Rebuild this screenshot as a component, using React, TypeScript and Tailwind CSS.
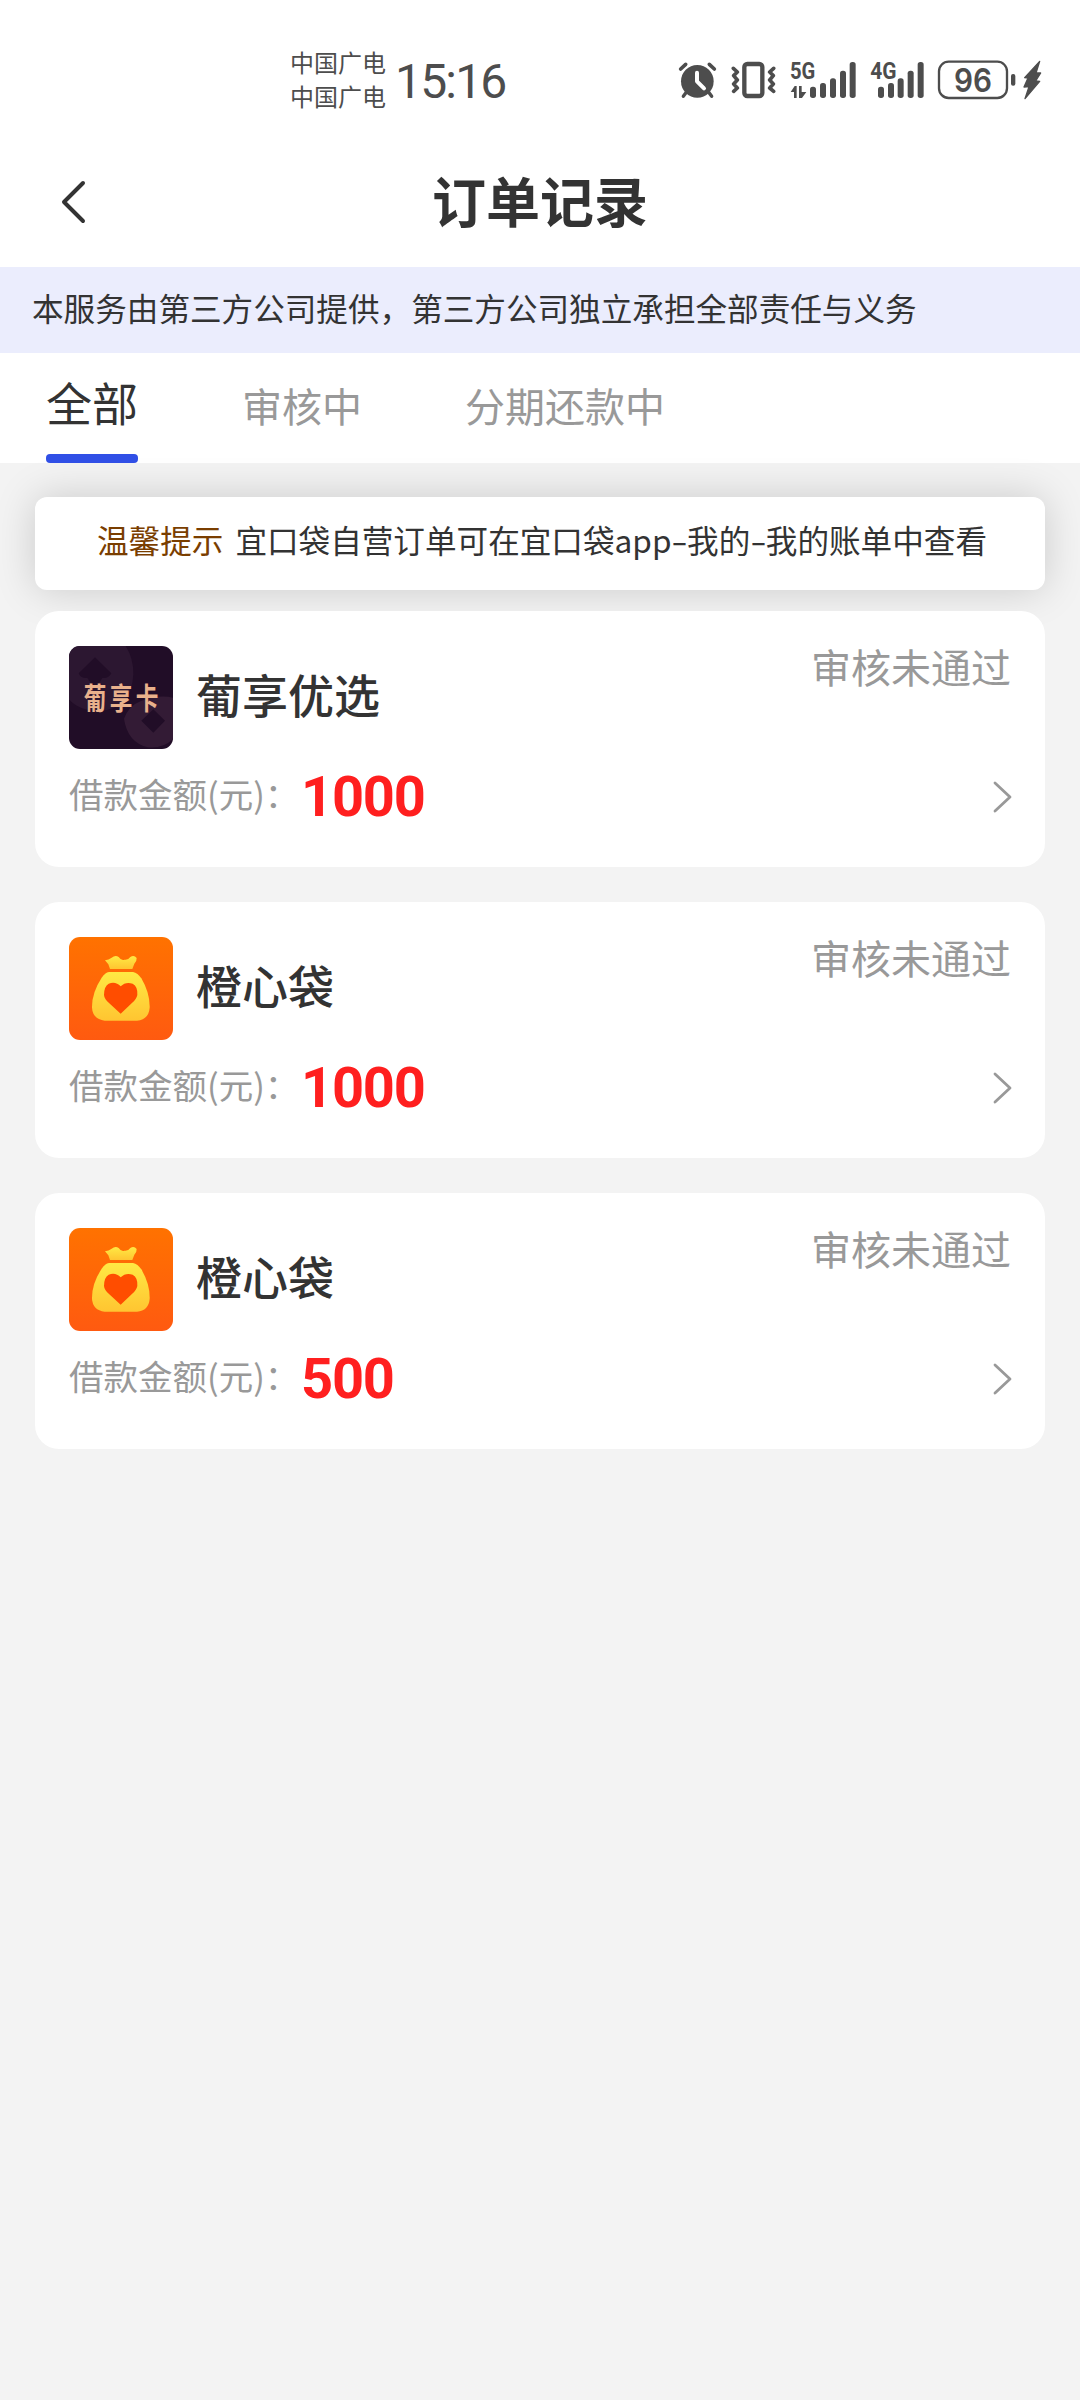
type LogoKind = "grape" | "bag";

interface Order {
  id: number;
  name: string;
  logo: LogoKind;
  status: string;
  amount: number;
}

const orders: Order[] = [
  { id: 1, name: "葡享优选", logo: "grape", status: "审核未通过", amount: 1000 },
  { id: 2, name: "橙心袋", logo: "bag", status: "审核未通过", amount: 1000 },
  { id: 3, name: "橙心袋", logo: "bag", status: "审核未通过", amount: 500 },
];

const AlarmIcon = () => (
  <svg width="39" height="40" viewBox="54 60 117 120" fill="none" stroke="#4d4d4d" strokeLinecap="round">
    <circle cx="112" cy="124" r="49" fill="#4d4d4d" stroke="none" />
    <path d="M62 87 L77 73 M163 87 L148 73" strokeWidth="11" />
    <path d="M80 155 L70 169 M145 155 L155 169" strokeWidth="10" />
    <path d="M111 98 V124 L132 145" stroke="#fff" strokeWidth="12" strokeLinejoin="round" />
  </svg>
);

const VibrateIcon = () => (
  <svg width="45" height="40" viewBox="213 60 135 120" fill="none" stroke="#4d4d4d">
    <rect x="253" y="72" width="54" height="96" rx="9" strokeWidth="13" />
    <path
      d="M220 85 L232 96 L221 107 L232 120 L221 132 L232 144 L221 154 M341 85 L329 96 L340 107 L329 120 L340 132 L329 144 L341 154"
      strokeWidth="11"
      strokeLinecap="round"
      strokeLinejoin="round"
    />
  </svg>
);

const Signal5G = () => (
  <svg width="66" height="40" viewBox="390 60 198 120" className="overflow-visible" fill="#4d4d4d">
    <text x="390" y="118" fontSize="70" fontWeight="700" textLength="76" lengthAdjust="spacingAndGlyphs" fontFamily="Roboto, sans-serif">
      5G
    </text>
    <path d="M392 156 L404 138 H410 V174 H402 V156 Z M417 138 H425 V156 H439 L426 174 H417 Z" />
    <rect x="450" y="140" width="18" height="34" rx="8" />
    <rect x="480" y="129" width="18" height="45" rx="8" />
    <rect x="510" y="115" width="18" height="59" rx="8" />
    <rect x="540" y="92" width="18" height="82" rx="8" />
    <rect x="569" y="66" width="18" height="108" rx="8" />
  </svg>
);

const Signal4G = () => (
  <svg width="54" height="40" viewBox="630 60 162 120" className="overflow-visible" fill="#4d4d4d">
    <text x="631" y="118" fontSize="70" fontWeight="700" textLength="79" lengthAdjust="spacingAndGlyphs" fontFamily="Roboto, sans-serif">
      4G
    </text>
    <rect x="654" y="140" width="18" height="34" rx="8" />
    <rect x="684" y="129" width="18" height="45" rx="8" />
    <rect x="713" y="115" width="18" height="59" rx="8" />
    <rect x="743" y="92" width="18" height="82" rx="8" />
    <rect x="773" y="66" width="18" height="108" rx="8" />
  </svg>
);

const Battery = () => (
  <svg width="78" height="40" viewBox="834 60 234 120" className="overflow-visible" fill="#4d4d4d">
    <rect x="837" y="65" width="204" height="109" rx="29" fill="none" stroke="#4d4d4d" strokeWidth="7" />
    <rect x="1053" y="102" width="13" height="35" rx="6" />
    <text x="882" y="155" fontSize="98" fontWeight="600" textLength="114" lengthAdjust="spacingAndGlyphs" fontFamily="Inter, sans-serif">
      96
    </text>
  </svg>
);

const BoltIcon = () => (
  <svg width="19" height="40" viewBox="1090 60 57 120" fill="#4d4d4d">
    <path
      d="M1140 64 L1095 113 L1105 114 L1093 141 L1108 140 L1096 176 L1140 124 L1128 123 L1143 99 L1129 99 Z"
      stroke="#4d4d4d"
      strokeWidth="4"
      strokeLinejoin="round"
    />
  </svg>
);

const StatusBar = () => (
  <div className="flex h-[135px] items-start justify-between pl-[290px] pr-[38px] text-[#4d4d4d]">
    <div className="flex">
      <div className="mt-[45px] text-[24px] leading-[34px]">
        <p>中国广电</p>
        <p>中国广电</p>
      </div>
      <p className="ml-[9px] mt-[52px] font-[Roboto,sans-serif] text-[48px] leading-[60px] tracking-[-1.8px]">15:16</p>
    </div>
    <div className="mt-[60px] flex">
      <AlarmIcon />
      <div className="ml-[14px]"><VibrateIcon /></div>
      <div className="ml-[14px]"><Signal5G /></div>
      <div className="ml-[14px]"><Signal4G /></div>
      <div className="ml-[14px]"><Battery /></div>
      <div className="ml-[7px]"><BoltIcon /></div>
    </div>
  </div>
);

const GrapeLogo = () => (
  <svg width="104" height="103" viewBox="0 0 312 309" className="shrink-0 rounded-[11px]">
    <rect width="312" height="309" fill="#210d27" />
    <path d="M0 0 H170 Q194 38 193 85 Q188 190 90 195 Q30 195 0 160 Z" fill="#2c1731" />
    <path d="M165 218 Q180 178 216 165 Q270 145 312 155 V280 Q280 309 236 304 Q175 288 165 218 Z" fill="#331b35" />
    <path d="M78 34 L127 82 Q120 98 100 96 L78 130 L55 96 Q34 98 29 82 Z" fill="#210d27" />
    <path d="M253 190 L288 224 L253 260 L217 224 Z" fill="#210d27" />
    <text
      transform="translate(44 188) scale(1 1.3)"
      fontSize="68"
      fontWeight="700"
      letterSpacing="10"
      fill="#e9b18c"
    >
      葡享卡
    </text>
  </svg>
);

const BagLogo = () => (
  <svg width="104" height="103" viewBox="0 0 312 309" className="shrink-0 rounded-[11px]">
    <defs>
      <linearGradient id="bagBg" x1="0" y1="0" x2="0" y2="1">
        <stop offset="0" stopColor="#ff7200" />
        <stop offset="1" stopColor="#ff5a10" />
      </linearGradient>
      <linearGradient id="bagBody" x1="0" y1="0" x2="0" y2="1">
        <stop offset="0" stopColor="#ffe944" />
        <stop offset="1" stopColor="#ffc531" />
      </linearGradient>
    </defs>
    <rect width="312" height="309" fill="url(#bagBg)" />
    <path
      d="M108 70 Q119 69 128 62 Q139 53 149 60 Q156 71 166 68 Q177 70 184 60 Q195 53 203 63 Q204 71 196 80 L190 96 H123 L118 82 Z"
      fill="url(#bagBody)"
    />
    <path
      d="M120 105 H192 Q206 108 217 124 Q243 168 242 212 Q239 248 204 251 H107 Q71 246 69 212 Q68 168 98 122 Q108 107 120 105 Z"
      fill="url(#bagBody)"
    />
    <path d="M155 148 Q170 133 191 140 Q207 149 205 174 Q202 188 188 199 L155 230 L120 198 Q106 186 105 174 Q105 148 119 140 Q140 132 155 148 Z" fill="#ff4d00" />
  </svg>
);

const OrderCard = ({ order }: { order: Order }) => (
  <div className="flex h-[256px] flex-col rounded-[24px] bg-white pl-[34px] pr-[34px] pt-[35px]">
    <div className="flex h-[103px] items-start justify-between">
      <div className="flex items-center">
        {order.logo === "grape" ? <GrapeLogo /> : <BagLogo />}
        <h2 className="mb-[10px] ml-[23px] text-[46px] font-medium leading-[56px] text-[#333]">{order.name}</h2>
      </div>
      <span className="-mt-[10px] text-[40px] leading-[60px] text-[#999]">{order.status}</span>
    </div>
    <div className="mt-[15px] flex h-[60px] items-center">
      <span className="-mt-[2px] w-[232px] whitespace-nowrap text-[34.5px] leading-[60px] text-[#999]">借款金额(元)：</span>
      <span className="mt-[5px] font-[Roboto,sans-serif] text-[56px] font-bold leading-[60px] tracking-[-1.2px] text-[#ff1f1f]">{order.amount}</span>
      <svg width="20" height="32" viewBox="0 0 20 32" className="-mr-[1px] ml-auto mt-[6px]" fill="none" stroke="#999" strokeWidth="2.8" strokeLinecap="round" strokeLinejoin="round">
        <path d="M3 2 L18 16 L3 30" />
      </svg>
    </div>
  </div>
);

const Dash = () => <span className="mx-[2.3px] inline-block scale-x-150">-</span>;

const App = () => {
  return (
    <div className="min-h-[2400px] w-[1080px] bg-[#f3f3f3] font-['Noto_Sans_CJK_SC',sans-serif]">
      <header className="bg-white">
        <StatusBar />
        <div className="grid h-[132px] grid-cols-[200px_1fr_200px] items-center">
          <svg width="26" height="46" viewBox="0 0 26 46" className="ml-[60px] mt-[2px]" fill="none" stroke="#333" strokeWidth="4" strokeLinecap="round" strokeLinejoin="round">
            <path d="M23 4 L4 23 L23 42" />
          </svg>
          <h1 className="mb-[3px] text-center text-[54px] font-bold leading-[60px] text-[#333]">订单记录</h1>
        </div>
      </header>

      <div className="flex h-[86px] items-center bg-[#ebedfd] pb-[4px] pl-[32px] text-[31.6px] text-[#333]">
        本服务由第三方公司提供，第三方公司独立承担全部责任与义务
      </div>

      <nav className="flex h-[110px] bg-white pl-[46px] text-[40px] text-[#999]">
        <div className="flex w-[92px] flex-col justify-between text-[#333]">
          <span className="pt-[14px] text-[46px] leading-[68px]">全部</span>
          <span className="h-[9px] rounded-[4px] bg-[#304fe6]"></span>
        </div>
        <span className="ml-[104px] pt-[22px] leading-[60px]">审核中</span>
        <span className="ml-[103px] pt-[22px] leading-[60px]">分期还款中</span>
      </nav>

      <main className="px-[35px] pt-[34px]">
        <div className="flex h-[93px] items-center rounded-[12px] bg-white pb-[7px] pl-[62px] text-[31.6px] text-[#333] shadow-[0_0_40px_rgba(0,0,0,0.17)]">
          <span className="text-[#7a3e00]">温馨提示</span>
          <span className="ml-[12px] whitespace-nowrap">
            宜口袋自营订单可在宜口袋app
            <Dash />
            我的
            <Dash />
            我的账单中查看
          </span>
        </div>
        <div className="relative mt-[21px] flex flex-col gap-[35px]">
          {orders.map((order) => (
            <OrderCard key={order.id} order={order} />
          ))}
        </div>
      </main>
    </div>
  );
};

export default App;
